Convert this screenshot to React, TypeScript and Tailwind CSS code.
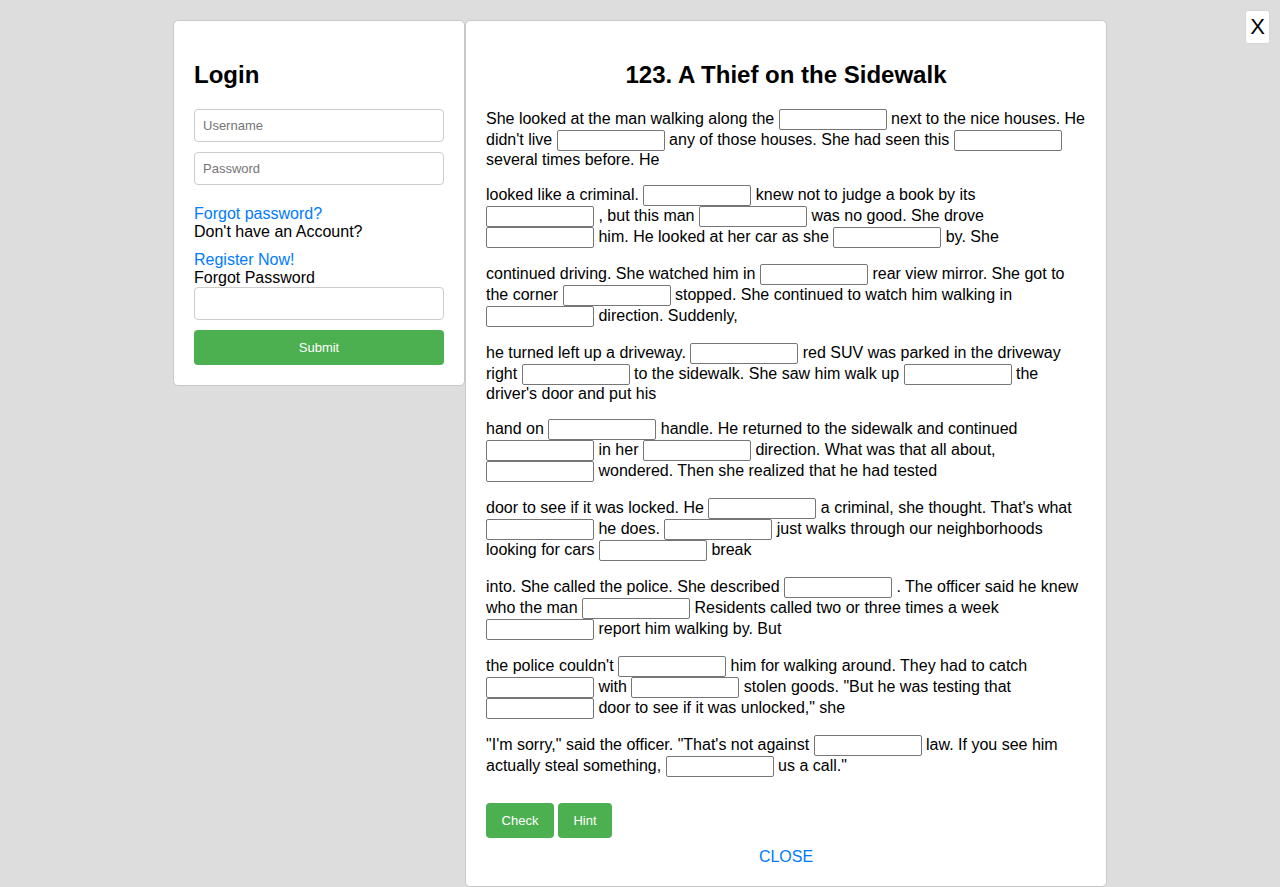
import React from "react";

const paras: string[][] = [
  ["She looked at the man walking along the", "next to the nice houses. He didn't live", "any of those houses. She had seen this", "several times before. He"],
  ["looked like a criminal.", "knew not to judge a book by its", ", but this man", "was no good. She drove", "him. He looked at her car as she", "by. She"],
  ["continued driving. She watched him in", "rear view mirror. She got to the corner", "stopped. She continued to watch him walking in", "direction. Suddenly,"],
  ["he turned left up a driveway.", "red SUV was parked in the driveway right", "to the sidewalk. She saw him walk up", "the driver's door and put his"],
  ["hand on", "handle. He returned to the sidewalk and continued", "in her", "direction. What was that all about,", "wondered. Then she realized that he had tested"],
  ["door to see if it was locked. He", "a criminal, she thought. That's what", "he does.", "just walks through our neighborhoods looking for cars", "break"],
  ["into. She called the police. She described", ". The officer said he knew who the man", "Residents called two or three times a week", "report him walking by. But"],
  ["the police couldn't", "him for walking around. They had to catch", "with", "stolen goods. \"But he was testing that", "door to see if it was unlocked,\" she"],
  ["\"I'm sorry,\" said the officer. \"That's not against", "law. If you see him actually steal something,", "us a call.\""],
];

function Blank() {
  return (
    <input
      type="text"
      className="inline-block w-[108px] h-[21px] border border-[#767676] rounded-[2px] bg-white px-[2px] text-[13.33px] align-baseline outline-none"
    />
  );
}

export default function App() {
  return (
    <div
      className="min-h-[887px] w-full bg-[#dddddd] relative text-black"
      style={{ fontFamily: '"Liberation Sans", Arial, Helvetica, sans-serif' }}
    >
      <button className="absolute top-[10px] right-[10px] w-[25px] h-[34px] bg-white border border-[#d6d6d6] rounded-[3px] text-[22px] leading-none flex items-center justify-center">
        X
      </button>
      <div className="flex justify-center items-start pt-[20px]">
        <div className="w-[292px] bg-white border border-[#c8c8c8] rounded-[5px] p-[20px]">
          <h2 className="text-[24px] font-bold leading-[28px] mt-[20px] mb-[20px]">Login</h2>
          <input
            placeholder="Username"
            className="block w-[250px] h-[33px] border border-[#cccccc] rounded-[4px] px-[8px] text-[13px] placeholder:text-[#757575] outline-none"
          />
          <input
            placeholder="Password"
            className="block w-[250px] h-[33px] border border-[#cccccc] rounded-[4px] px-[8px] text-[13px] mt-[10px] placeholder:text-[#757575] outline-none"
          />
          <div className="mt-[20px] text-[16px] leading-[18px]">
            <a className="block text-[#007bff]">Forgot password?</a>
            <div>Don't have an Account?</div>
            <a className="block text-[#007bff] mt-[10px]">Register Now!</a>
            <div>Forgot Password</div>
          </div>
          <input className="block w-[250px] h-[33px] border border-[#cccccc] rounded-[4px] px-[8px] text-[13px] mt-[0px] outline-none" />
          <button className="block w-[250px] h-[35px] mt-[10px] bg-[#4caf50] text-white text-[13px] rounded-[4px]">
            Submit
          </button>
        </div>
        <div className="w-[642px] bg-white border border-[#c8c8c8] rounded-[5px] px-[20px] pt-[20px] pb-[20px]">
          <h2 className="text-center text-[24px] font-bold leading-[normal] mt-[20px] mb-[20px]">
            123. A Thief on the Sidewalk
          </h2>
          {paras.map((p, i) => (
            <p key={i} className="text-[16px] leading-[normal] my-[16px]">
              {p.map((seg, j) => (
                <React.Fragment key={j}>
                  {seg}
                  {j < p.length - 1 ? <> <Blank /> </> : null}
                </React.Fragment>
              ))}
            </p>
          ))}
          <div className="mt-[26px] flex gap-[4px]">
            <button className="w-[68px] h-[35px] bg-[#4caf50] text-white text-[13px] rounded-[4px]">Check</button>
            <button className="w-[54px] h-[35px] bg-[#4caf50] text-white text-[13px] rounded-[4px]">Hint</button>
          </div>
          <div className="text-center mt-[10px] text-[16px] leading-[18px] text-[#007bff]">CLOSE</div>
        </div>
      </div>
    </div>
  );
}
